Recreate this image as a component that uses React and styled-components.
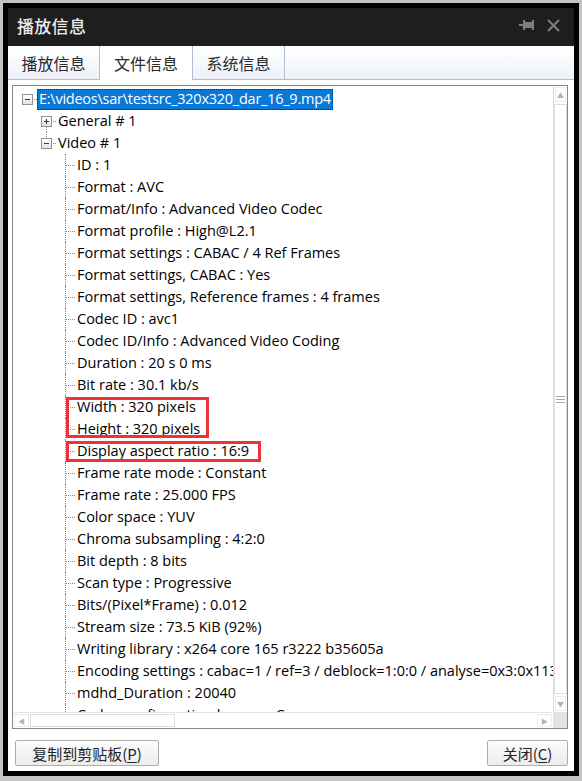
import React from "react";
import styled, { createGlobalStyle, css } from "styled-components";

const GlobalStyle = createGlobalStyle`
  html, body {
    margin: 0;
    padding: 0;
    background: #c4c4c4;
  }
  body {
    font-family: "Open Sans", "Noto Sans CJK SC", sans-serif;
  }
`;

const Window = styled.div`
  margin: 3px 0 0 3px;
  width: 566px;
  height: 763px;
  border: 5px solid #000;
  display: flex;
  flex-direction: column;
  background: #fff;
`;

const TitleBar = styled.div`
  height: 38px;
  flex: none;
  background: #1e1e1e;
  display: flex;
  align-items: center;
  padding: 0 14px 4px 9px;
  box-sizing: border-box;
`;

const Title = styled.div`
  flex: 1;
  color: #ececec;
  font-family: "Noto Sans CJK SC", sans-serif;
  font-size: 17px;
  font-weight: 500;
  letter-spacing: 0.3px;
`;

const TitleButtons = styled.div`
  display: flex;
  align-items: center;
  gap: 12px;
`;

const TabStrip = styled.div`
  height: 34px;
  flex: none;
  display: flex;
  background: linear-gradient(#ffffff, #eef1fa);
  border-bottom: 1px solid #b4bcd4;
  box-sizing: border-box;
`;

const Tab = styled.div`
  width: 92px;
  display: flex;
  align-items: center;
  justify-content: center;
  font-family: "Noto Sans CJK SC", sans-serif;
  font-size: 16px;
  color: #2b2b2b;
  border-right: 1px solid #b4bcd4;
  box-sizing: border-box;
  ${(p) =>
    p.$active &&
    css`
      background: #fff;
      border-left: 1px solid #b4bcd4;
      margin-bottom: -1px;
      width: 94px;
      margin-left: -1px;
    `}
`;

const Body = styled.div`
  flex: 1;
  display: flex;
  flex-direction: column;
  padding: 5px 6px 0 4px;
  min-height: 0;
`;

const TreeBox = styled.div`
  flex: 1;
  border: 1px solid #84878c;
  display: grid;
  grid-template-columns: 1fr 14px;
  grid-template-rows: 1fr 16px;
  min-height: 0;
  overflow: hidden;
`;

const TreeView = styled.div`
  overflow: hidden;
  padding-top: 2px;
  font-size: 14.5px;
  color: #000;
`;

const Row = styled.div`
  height: 22px;
  display: flex;
  align-items: center;
  padding-left: ${(p) => 5 + p.$level * 19}px;
  white-space: nowrap;
`;

const Stub = styled.div`
  position: relative;
  width: 19px;
  height: 22px;
  flex: none;

  &::before {
    content: "";
    position: absolute;
    left: 9px;
    top: ${(p) => (p.$up ? "0" : "11px")};
    bottom: ${(p) => (p.$down ? "0" : "11px")};
    border-left: 1px dotted #8a8a8a;
  }

  &::after {
    content: "";
    position: absolute;
    left: 10px;
    right: 0;
    top: 11px;
    border-top: 1px dotted #8a8a8a;
  }
`;

const Expander = styled.div`
  position: absolute;
  left: 4px;
  top: 6px;
  width: 9px;
  height: 9px;
  border: 1px solid #919191;
  background: linear-gradient(#ffffff, #e2e2e2);
  z-index: 1;

  &::before {
    content: "";
    position: absolute;
    left: 2px;
    right: 2px;
    top: 4px;
    height: 1px;
    background: #3a3a3a;
  }

  ${(p) =>
    p.$plus &&
    css`
      &::after {
        content: "";
        position: absolute;
        top: 2px;
        bottom: 2px;
        left: 4px;
        width: 1px;
        background: #3a3a3a;
      }
    `}
`;

const Label = styled.span`
  padding: 1px 2px 2px;
  line-height: 18px;
  ${(p) =>
    p.$selected &&
    css`
      background: #0a78d7;
      color: #fff;
      letter-spacing: -0.25px;
      outline: 1px dotted #0d2b6a;
      outline-offset: -1px;
    `}
`;

const Group = styled.div`
  position: relative;
`;

const Mark = styled.div`
  position: absolute;
  left: 53px;
  top: 1px;
  bottom: ${(p) => p.$bottom}px;
  width: ${(p) => p.$width}px;
  border: 3px solid #ee3338;
  box-sizing: border-box;
  pointer-events: none;
`;

const VScroll = styled.div`
  border-left: 1px solid #dcdcdc;
  background: #fff;
  display: flex;
  flex-direction: column;
`;

const HScroll = styled.div`
  border-top: 1px solid #e4e4e4;
  background: #fff;
  display: flex;
  align-items: stretch;
`;

const Corner = styled.div`
  background: #e3e3e3;
`;

const Arrow = styled.div`
  flex: none;
  width: ${(p) => (p.$vertical ? "auto" : "13px")};
  height: ${(p) => (p.$vertical ? "13px" : "auto")};
  display: flex;
  align-items: center;
  justify-content: center;
  color: #b4b4b4;
  font-size: 7px;
  border: 1px solid #ececec;
  margin: 1px;
`;

const Thumb = styled.div`
  flex: ${(p) => (p.$grow ? 1 : "none")};
  width: ${(p) => (p.$width ? `${p.$width}px` : "auto")};
  border: 1px solid #dedede;
  background: #fff;
  display: flex;
  align-items: center;
  justify-content: center;
  margin: 1px 0;
`;

const Track = styled.div`
  flex: 1;
`;

const Grip = styled.div`
  width: 9px;
  height: 7px;
  background: repeating-linear-gradient(#a9a9a9 0 1px, transparent 1px 3px);
`;

const ButtonRow = styled.div`
  height: 42px;
  flex: none;
  display: flex;
  justify-content: space-between;
  align-items: flex-start;
  padding: 11px 0 0 3px;
  box-sizing: border-box;
`;

const Button = styled.button`
  height: 26px;
  width: ${(p) => p.$width}px;
  border: 1px solid #adadad;
  border-radius: 2px;
  background: linear-gradient(#fcfcfc, #ececec);
  font-family: "Noto Sans CJK SC", sans-serif;
  font-size: 15px;
  color: #222;
  padding: 0;
  display: flex;
  align-items: center;
  justify-content: center;

  u {
    text-decoration: underline;
    text-underline-offset: 2px;
  }
`;

function PinIcon() {
  return (
    <svg width="16" height="12" viewBox="0 0 16 12">
      <rect x="0" y="5" width="5" height="2" fill="#7e7e7e" />
      <rect x="4" y="1" width="2" height="10" fill="#7e7e7e" />
      <rect x="6" y="3" width="7" height="6" fill="#7e7e7e" />
      <rect x="13" y="1" width="2" height="10" fill="#7e7e7e" />
    </svg>
  );
}

function CloseIcon() {
  return (
    <svg width="13" height="13" viewBox="0 0 13 13">
      <path d="M1 1 L12 12 M12 1 L1 12" stroke="#7e7e7e" strokeWidth="2" />
    </svg>
  );
}

const leaves = [
  "ID : 1",
  "Format : AVC",
  "Format/Info : Advanced Video Codec",
  "Format profile : High@L2.1",
  "Format settings : CABAC / 4 Ref Frames",
  "Format settings, CABAC : Yes",
  "Format settings, Reference frames : 4 frames",
  "Codec ID : avc1",
  "Codec ID/Info : Advanced Video Coding",
  "Duration : 20 s 0 ms",
  "Bit rate : 30.1 kb/s",
  ["Width : 320 pixels", "Height : 320 pixels"],
  ["Display aspect ratio : 16:9"],
  "Frame rate mode : Constant",
  "Frame rate : 25.000 FPS",
  "Color space : YUV",
  "Chroma subsampling : 4:2:0",
  "Bit depth : 8 bits",
  "Scan type : Progressive",
  "Bits/(Pixel*Frame) : 0.012",
  "Stream size : 73.5 KiB (92%)",
  "Writing library : x264 core 165 r3222 b35605a",
  "Encoding settings : cabac=1 / ref=3 / deblock=1:0:0 / analyse=0x3:0x113 / me=hex / subme=7 / psy=1",
  "mdhd_Duration : 20040",
  "Codec configuration box : avcC",
];

const markWidths = { 0: 143, 1: 195 };

function Leaf({ text }) {
  return (
    <Row $level={2}>
      <Stub $up $down />
      <Label>{text}</Label>
    </Row>
  );
}

export default function App() {
  let markIndex = 0;
  return (
    <>
      <GlobalStyle />
      <Window>
        <TitleBar>
          <Title>播放信息</Title>
          <TitleButtons>
            <PinIcon />
            <CloseIcon />
          </TitleButtons>
        </TitleBar>
        <TabStrip>
          <Tab>播放信息</Tab>
          <Tab $active>文件信息</Tab>
          <Tab>系统信息</Tab>
        </TabStrip>
        <Body>
          <TreeBox>
            <TreeView>
              <Row $level={0}>
                <Stub>
                  <Expander />
                </Stub>
                <Label $selected>E:\videos\sar\testsrc_320x320_dar_16_9.mp4</Label>
              </Row>
              <Row $level={1}>
                <Stub $down>
                  <Expander $plus />
                </Stub>
                <Label>General # 1</Label>
              </Row>
              <Row $level={1}>
                <Stub $up>
                  <Expander />
                </Stub>
                <Label>Video # 1</Label>
              </Row>
              {leaves.map((item, i) => {
                if (Array.isArray(item)) {
                  const w = markWidths[markIndex++];
                  return (
                    <Group key={i}>
                      {item.map((t) => (
                        <Leaf key={t} text={t} />
                      ))}
                      <Mark $width={w} $bottom={item.length > 1 ? 2 : 0} />
                    </Group>
                  );
                }
                return <Leaf key={i} text={item} />;
              })}
            </TreeView>
            <VScroll>
              <Arrow $vertical>▲</Arrow>
              <Thumb $grow>
                <Grip />
              </Thumb>
              <Arrow $vertical>▼</Arrow>
            </VScroll>
            <HScroll>
              <Arrow>◀</Arrow>
              <Thumb $width={143} />
              <Track />
              <Arrow>▶</Arrow>
            </HScroll>
            <Corner />
          </TreeBox>
          <ButtonRow>
            <Button $width={144}>
              复制到剪贴板(<u>P</u>)
            </Button>
            <Button $width={81}>
              关闭(<u>C</u>)
            </Button>
          </ButtonRow>
        </Body>
      </Window>
    </>
  );
}
